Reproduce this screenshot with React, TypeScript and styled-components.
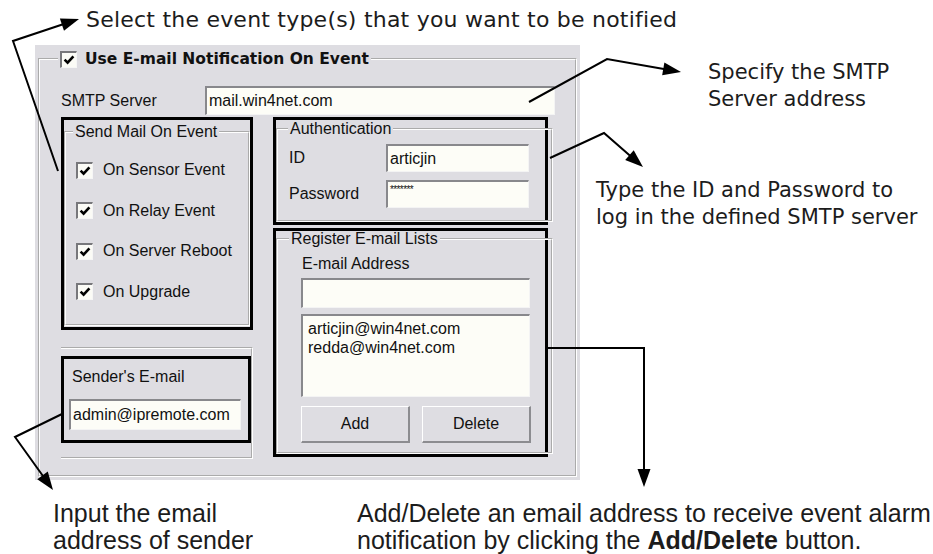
import React from "react";
import styled, { createGlobalStyle } from "styled-components";

const GlobalStyle = createGlobalStyle`
  html, body {
    margin: 0;
    padding: 0;
    background: #fff;
  }
  body {
    font-family: "Liberation Sans", Arial, sans-serif;
  }
`;

const PANEL = "#dedde2";

const Page = styled.div`
  position: relative;
  width: 933px;
  height: 554px;
  overflow: hidden;
  background: #fff;
  color: #1c1c1c;
`;

const TopNote = styled.div`
  height: 45px;
  padding-left: 86px;
  font-family: "DejaVu Sans", Verdana, sans-serif;
  font-size: 22px;
  letter-spacing: 0.22px;
  line-height: 40px;
  white-space: nowrap;
`;

const Middle = styled.div`
  display: flex;
  height: 435px;
`;

const Dialog = styled.div`
  box-sizing: border-box;
  width: 545px;
  height: 435px;
  margin-left: 35px;
  padding: 5px 3px 3px 3px;
  background: ${PANEL};
  color: #111;
  font-family: "Liberation Sans", Arial, sans-serif;
  font-size: 16px;
`;

const Group = styled.fieldset<{ $mt?: number; $mr?: number; $h?: number }>`
  box-sizing: border-box;
  margin: ${(p) => p.$mt ?? 0}px ${(p) => p.$mr ?? 0}px 0 0;
  padding: 0;
  min-width: 0;
  border: 2px groove #ffffff;
  ${(p) => (p.$h ? `height: ${p.$h}px;` : "height: 100%;")}
`;

const Legend = styled.legend<{ $ml: number; $lh?: number }>`
  display: flex;
  align-items: center;
  gap: 8px;
  margin-left: ${(p) => p.$ml}px;
  padding: 0 2px;
  line-height: ${(p) => p.$lh ?? 18}px;
`;

const HeaderTitle = styled.span`
  font-family: "DejaVu Sans", Verdana, sans-serif;
  font-weight: bold;
  font-size: 15.5px;
`;

const OuterBody = styled.div`
  padding: 18px 0 0 21px;
`;

const SmtpRow = styled.div`
  display: flex;
  align-items: center;
  height: 29px;
`;

const Label = styled.span<{ $w?: number; $pl?: number }>`
  display: inline-block;
  ${(p) => (p.$w ? `width: ${p.$w}px;` : "")}
  padding-left: ${(p) => p.$pl ?? 0}px;
  line-height: 18px;
  white-space: nowrap;
`;

const TextBox = styled.div<{ $w: number; $h: number }>`
  box-sizing: border-box;
  display: flex;
  align-items: center;
  width: ${(p) => p.$w}px;
  height: ${(p) => p.$h}px;
  padding-left: 2px;
  background: #fdfdf7;
  border-top: 2px solid #88888c;
  border-left: 2px solid #88888c;
  border-right: 1px solid #f4f4f4;
  border-bottom: 1px solid #f4f4f4;
  white-space: nowrap;
`;

const Masked = styled.span`
  align-self: flex-start;
  padding-top: 3px;
  font-size: 10px;
  letter-spacing: -0.6px;
  line-height: 10px;
`;

const Columns = styled.div`
  display: flex;
  gap: 20px;
  margin-top: 2px;
`;

const Column = styled.div<{ $w: number }>`
  display: flex;
  flex-direction: column;
  width: ${(p) => p.$w}px;
`;

const Highlight = styled.div<{ $h: number; $mt?: number }>`
  box-sizing: border-box;
  height: ${(p) => p.$h}px;
  margin-top: ${(p) => p.$mt ?? 0}px;
  border: 3px solid #000;
  display: flex;
  flex-direction: column;
`;

const CheckList = styled.div`
  display: flex;
  flex-direction: column;
  padding: 9px 0 0 10px;
`;

const CheckRow = styled.div`
  display: flex;
  align-items: center;
  gap: 10px;
  height: 40.5px;
`;

const Box = styled.span`
  box-sizing: border-box;
  display: inline-flex;
  align-items: center;
  justify-content: center;
  width: 17px;
  height: 17px;
  background: #fbfbf6;
  border-top: 2px solid #77777b;
  border-left: 2px solid #77777b;
  border-right: 1px solid #f6f6f6;
  border-bottom: 1px solid #f6f6f6;
`;

const Check = () => (
  <Box>
    <svg width="12" height="12" viewBox="0 0 12 12">
      <path d="M1.6 5.6 L4.6 8.6 L10.4 2.4" fill="none" stroke="#000" strokeWidth="2.6" />
    </svg>
  </Box>
);

const SenderFrame = styled.div`
  box-sizing: border-box;
  height: 112px;
  margin-top: 17px;
  border: 2px groove #ffffff;
  border-left: none;
  padding-top: 7px;
`;

const SenderBody = styled.div`
  display: flex;
  flex-direction: column;
  padding: 9px 0 0 5px;
`;

const FieldRow = styled.div<{ $mt: number }>`
  display: flex;
  align-items: center;
  margin-top: ${(p) => p.$mt}px;
`;

const RegisterBody = styled.div`
  display: flex;
  flex-direction: column;
  padding-left: 23px;
`;

const ListBox = styled.div`
  box-sizing: border-box;
  width: 229px;
  height: 83px;
  margin-top: 6px;
  padding: 3px 0 0 5px;
  background: #fdfdf7;
  border-top: 2px solid #88888c;
  border-left: 2px solid #88888c;
  border-right: 1px solid #f4f4f4;
  border-bottom: 1px solid #f4f4f4;
  line-height: 19px;
`;

const Buttons = styled.div`
  display: flex;
  gap: 12px;
  margin-top: 9px;
`;

const Button = styled.button`
  box-sizing: border-box;
  width: 109px;
  height: 37px;
  padding: 0;
  background: ${PANEL};
  color: #111;
  font-family: inherit;
  font-size: 16px;
  border-top: 1px solid #ffffff;
  border-left: 1px solid #ffffff;
  border-right: 2px solid #8c8c90;
  border-bottom: 2px solid #8c8c90;
`;

const Notes = styled.div`
  display: flex;
  flex-direction: column;
  font-family: "DejaVu Sans", Verdana, sans-serif;
  font-size: 21px;
  line-height: 27px;
  white-space: nowrap;
`;

const Note = styled.div<{ $ml: number; $mt: number }>`
  margin: ${(p) => p.$mt}px 0 0 ${(p) => p.$ml}px;
`;

const Bottom = styled.div`
  display: grid;
  grid-template-columns: 304px 1fr;
  padding: 20px 0 0 53px;
  font-family: "Liberation Sans", Arial, sans-serif;
  font-size: 25px;
  line-height: 27px;
  white-space: nowrap;
`;

const Overlay = styled.svg`
  position: absolute;
  left: 0;
  top: 0;
  pointer-events: none;
`;

type Pt = [number, number];

const arrows: Pt[][] = [
  [[58, 171], [13, 41], [79, 19]],
  [[529, 102], [607, 59], [681, 72]],
  [[550, 158], [604, 133], [643, 167]],
  [[548, 348], [644, 348], [644, 487]],
  [[62, 414], [15, 437], [53, 490]],
];

const Arrow = ({ pts }: { pts: Pt[] }) => {
  const [ax, ay] = pts[pts.length - 2];
  const [tx, ty] = pts[pts.length - 1];
  const len = Math.hypot(tx - ax, ty - ay);
  const ux = (tx - ax) / len;
  const uy = (ty - ay) / len;
  const bx = tx - ux * 18;
  const by = ty - uy * 18;
  const head = `${tx},${ty} ${bx - uy * 6.5},${by + ux * 6.5} ${bx + uy * 6.5},${by - ux * 6.5}`;
  const line = pts.slice(0, -1).concat([[bx + ux * 2, by + uy * 2]]);
  return (
    <g>
      <polyline points={line.map((p) => p.join(",")).join(" ")} fill="none" stroke="#000" strokeWidth="2" />
      <polygon points={head} fill="#000" />
    </g>
  );
};

export default function App() {
  return (
    <Page>
      <GlobalStyle />
      <TopNote>Select the event type(s) that you want to be notified</TopNote>
      <Middle>
        <Dialog>
          <Group>
            <Legend $ml={18}>
              <Check />
              <HeaderTitle>Use E-mail Notification On Event</HeaderTitle>
            </Legend>
            <OuterBody>
              <SmtpRow>
                <Label $w={144}>SMTP Server</Label>
                <TextBox $w={350} $h={29}>mail.win4net.com</TextBox>
              </SmtpRow>
              <Columns>
                <Column $w={192}>
                  <Highlight $h={213}>
                    <Group $mt={3} $h={203}>
                      <Legend $ml={7}>Send Mail On Event</Legend>
                      <CheckList>
                        {["On Sensor Event", "On Relay Event", "On Server Reboot", "On Upgrade"].map((t) => (
                          <CheckRow key={t}>
                            <Check />
                            <span>{t}</span>
                          </CheckRow>
                        ))}
                      </CheckList>
                    </Group>
                  </Highlight>
                  <SenderFrame>
                    <Highlight $h={87}>
                      <SenderBody>
                        <Label $pl={3}>Sender's E-mail</Label>
                        <FieldRow $mt={13}>
                          <TextBox $w={172} $h={31}>admin@ipremote.com</TextBox>
                        </FieldRow>
                      </SenderBody>
                    </Highlight>
                  </SenderFrame>
                </Column>
                <Column $w={275}>
                  <Highlight $h={108}>
                    <Group $mt={0} $mr={-8} $h={104}>
                      <Legend $ml={10}>Authentication</Legend>
                      <FieldRow $mt={6}>
                        <Label $w={97} $pl={11}>ID</Label>
                        <TextBox $w={143} $h={28}>articjin</TextBox>
                      </FieldRow>
                      <FieldRow $mt={8}>
                        <Label $w={97} $pl={11}>Password</Label>
                        <TextBox $w={143} $h={28}>
                          <Masked>*******</Masked>
                        </TextBox>
                      </FieldRow>
                    </Group>
                  </Highlight>
                  <Highlight $h={229} $mt={3}>
                    <Group $mr={-8} $h={228}>
                      <Legend $ml={11} $lh={16}>Register E-mail Lists</Legend>
                      <RegisterBody>
                        <FieldRow $mt={8}>
                          <Label $pl={1}>E-mail Address</Label>
                        </FieldRow>
                        <FieldRow $mt={5}>
                          <TextBox $w={229} $h={30} />
                        </FieldRow>
                        <ListBox>
                          <div>articjin@win4net.com</div>
                          <div>redda@win4net.com</div>
                        </ListBox>
                        <Buttons>
                          <Button>Add</Button>
                          <Button>Delete</Button>
                        </Buttons>
                      </RegisterBody>
                    </Group>
                  </Highlight>
                </Column>
              </Columns>
            </OuterBody>
          </Group>
        </Dialog>
        <Notes>
          <Note $ml={128} $mt={14}>
            Specify the SMTP
            <br />
            Server address
          </Note>
          <Note $ml={16} $mt={64}>
            Type the ID and Password to
            <br />
            log in the defined SMTP server
          </Note>
        </Notes>
      </Middle>
      <Bottom>
        <div>
          Input the email
          <br />
          address of sender
        </div>
        <div>
          Add/Delete an email address to receive event alarm
          <br />
          notification by clicking the <b>Add/Delete</b> button.
        </div>
      </Bottom>
      <Overlay width="933" height="554" viewBox="0 0 933 554">
        {arrows.map((a, i) => (
          <Arrow key={i} pts={a} />
        ))}
      </Overlay>
    </Page>
  );
}
